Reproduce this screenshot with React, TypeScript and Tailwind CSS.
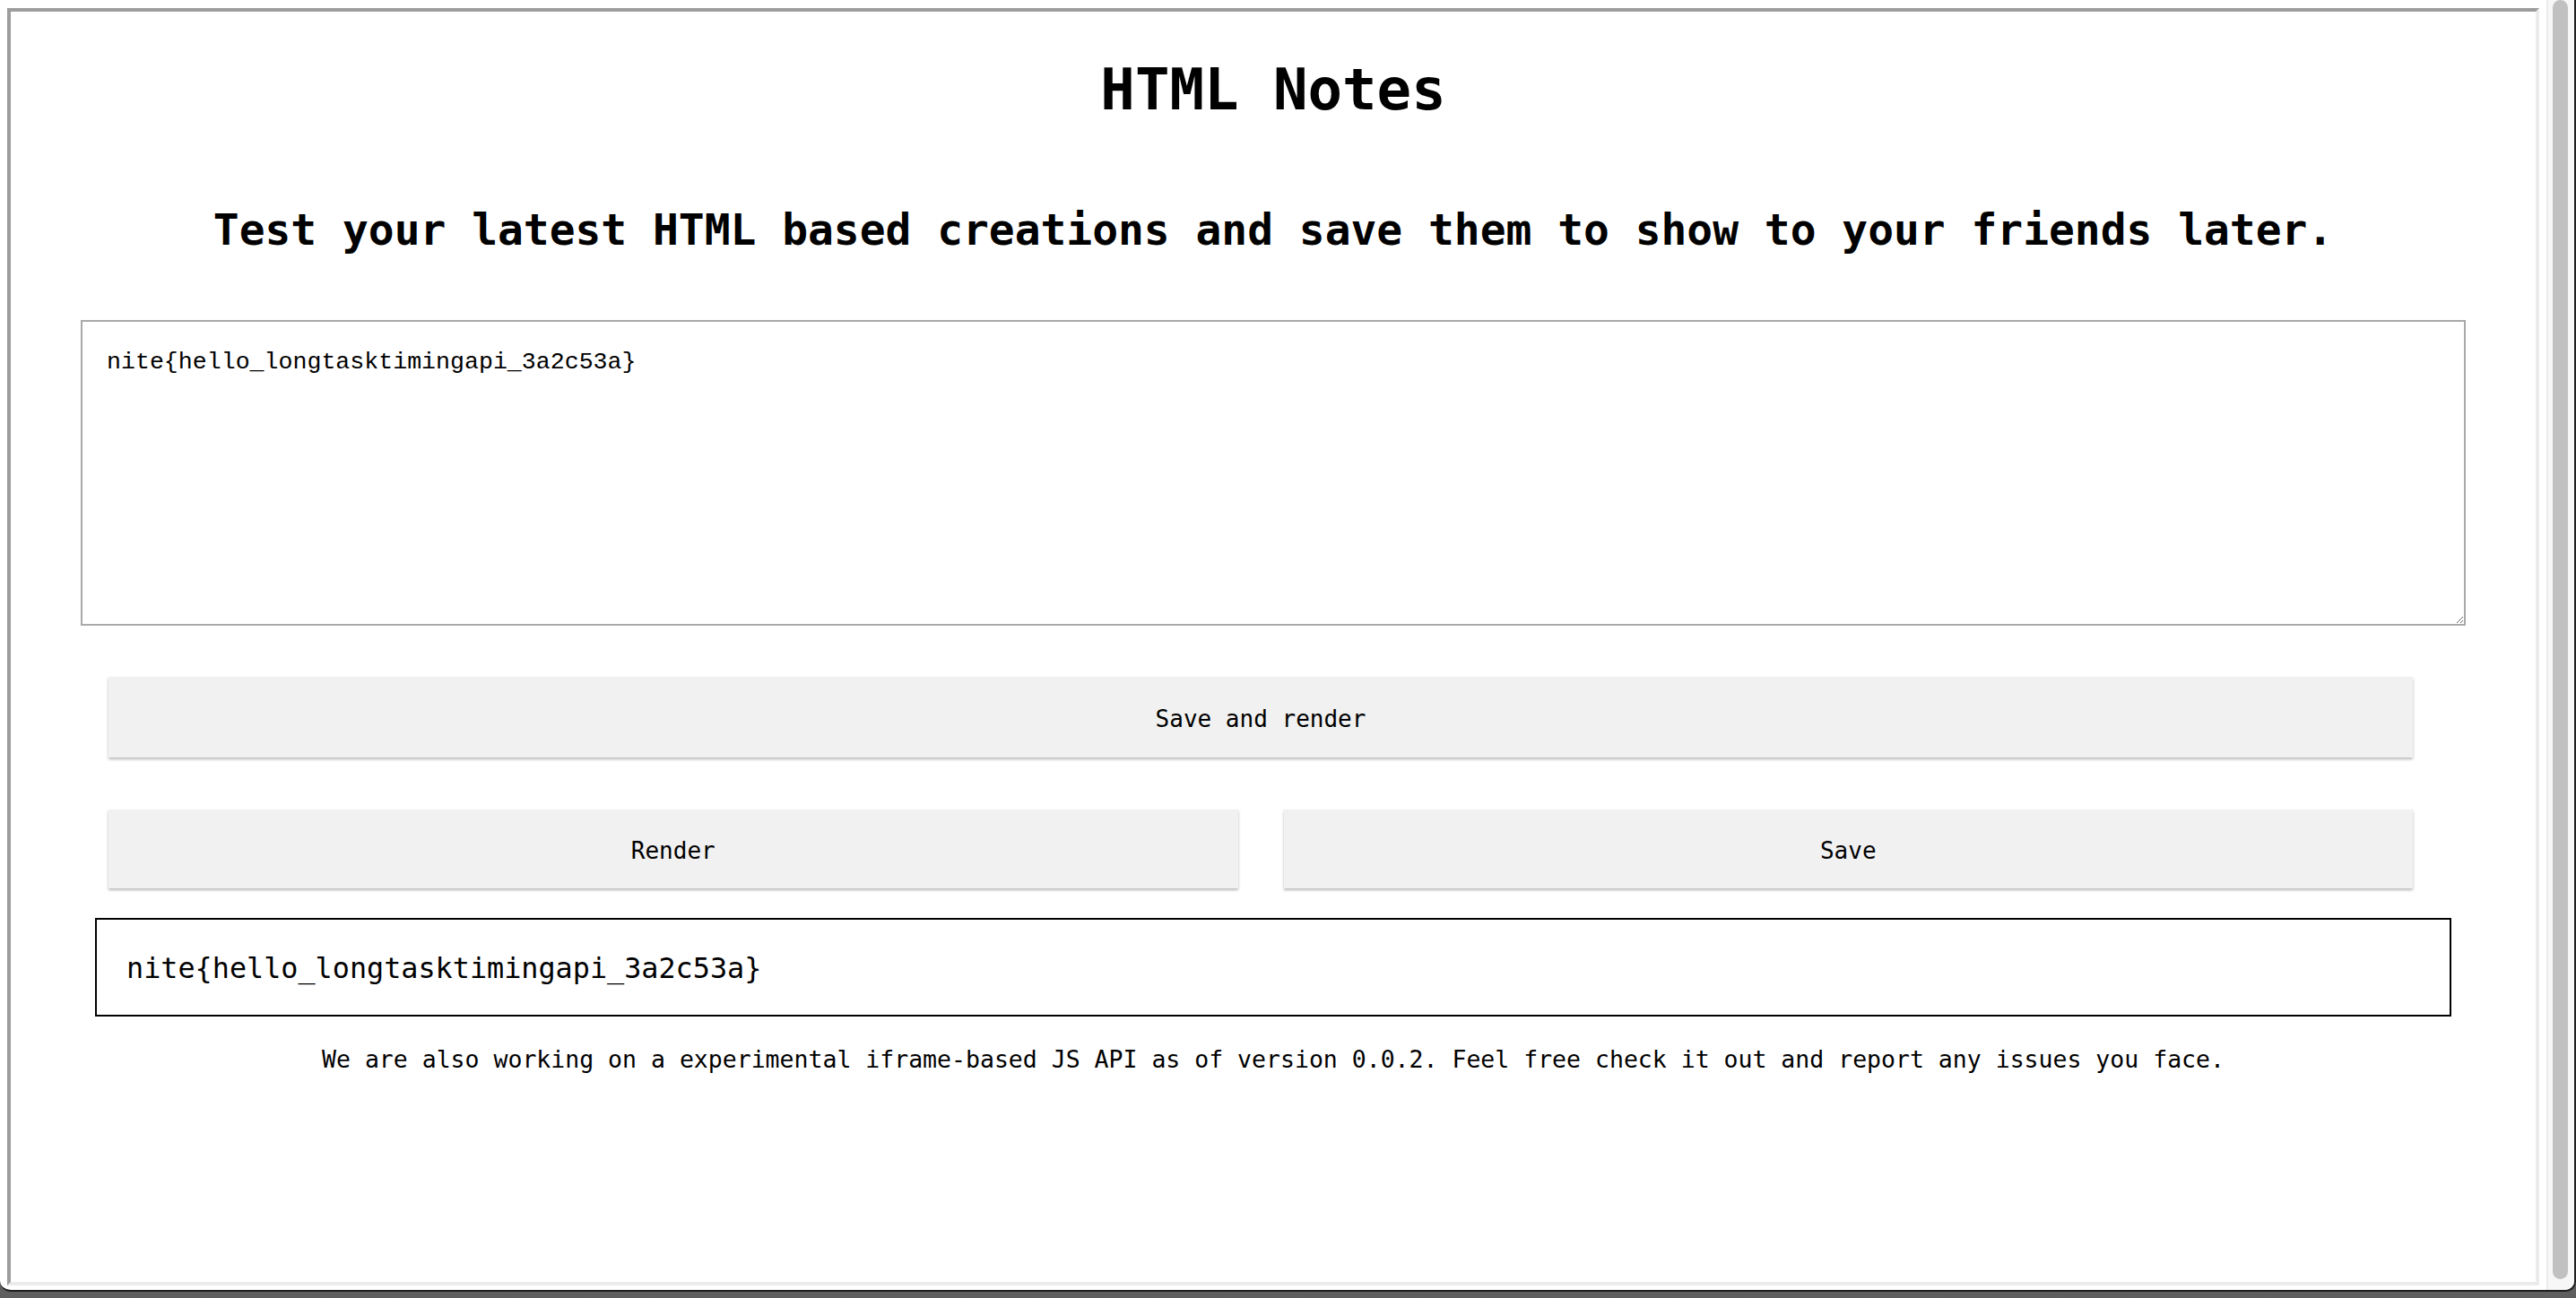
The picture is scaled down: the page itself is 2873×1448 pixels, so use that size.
import React from "react";

const mono = "font-['DejaVu_Sans_Mono',monospace]";

export default function App() {
  return (
    <div className="h-screen w-full bg-gradient-to-b from-[#8a8a8a] to-[#5e5e5e] flex flex-col overflow-hidden">
      {/* window body */}
      <div className="flex-1 flex bg-white rounded-b-[12px] border-b-2 border-r-2 border-[#1e1e1e] overflow-hidden">
        {/* page with body margin */}
        <div className="flex-1 px-2 pt-[9px] pb-[5px]">
          <div className="h-full border-4 border-t-[#9d9d9d] border-l-[#9d9d9d] border-r-[#ebebeb] border-b-[#ebebeb] bg-white text-black">
            <h1 className={`${mono} text-[64px] leading-[1.164] font-bold text-center mt-[50px]`}>
              HTML Notes
            </h1>
            <h2 className={`${mono} text-[47.9px] leading-[1.164] font-bold text-center mt-[92px]`}>
              Test your latest HTML based creations and save them to show to your friends later.
            </h2>

            <div className="mx-[78px] mt-[72px]">
              <textarea
                defaultValue="nite{hello_longtasktimingapi_3a2c53a}"
                className="block w-full h-[341px] border-2 border-[#a9a9a9] pl-[27px] pr-[20px] pt-[30px] pb-[20px] font-['Liberation_Mono',monospace] text-[26.6px] leading-[1.15] text-black outline-none"
              />
            </div>

            <div className="ml-[109px] mr-[137px] mt-[57px] flex flex-col gap-[58px]">
              <button className={`${mono} h-[90px] w-full pt-[4px] bg-[#f1f1f1] text-[26px] text-black shadow-[0_2px_3px_rgba(0,0,0,0.28)]`}>
                Save and render
              </button>
              <div className="flex gap-[51px]">
                <button className={`${mono} h-[88px] flex-1 pt-[4px] bg-[#f1f1f1] text-[26px] text-black shadow-[0_2px_3px_rgba(0,0,0,0.28)]`}>
                  Render
                </button>
                <button className={`${mono} h-[88px] flex-1 pt-[4px] bg-[#f1f1f1] text-[26px] text-black shadow-[0_2px_3px_rgba(0,0,0,0.28)]`}>
                  Save
                </button>
              </div>
            </div>

            <div className="mx-[94px] mt-[33px] h-[110px] border-2 border-black flex items-center px-[33px] pt-[2px]">
              <span className={`${mono} text-[31.8px] text-black`}>nite{"{"}hello_longtasktimingapi_3a2c53a{"}"}</span>
            </div>

            <p className={`${mono} text-[26.5px] text-center mt-[28px]`}>
              We are also working on a experimental iframe-based JS API as of version 0.0.2. Feel free check it out and report any issues you face.
            </p>
          </div>
        </div>

        {/* scrollbar */}
        <div className="w-[31px] border-l-2 border-[#ebebeb] bg-[#f7f7f7] pl-[5px] pr-[4px] pb-[12px]">
          <div className="h-full w-[17px] rounded-full bg-[#c1c1c1]" />
        </div>
      </div>
      <div className="h-[7px]" />
    </div>
  );
}
